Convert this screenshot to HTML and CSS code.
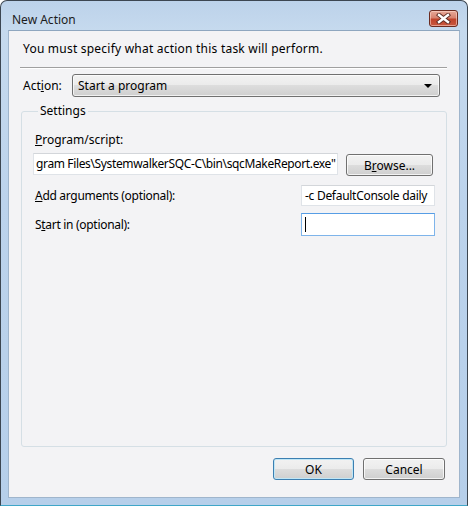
FILE: index.html
```html
<!DOCTYPE html>
<html lang="en">

<head>
    <meta charset="UTF-8" />
    <title>New Action</title>
    <link rel="stylesheet" href="styles.css">
</head>

<body>
    <div class="window">
        <div class="titlebar">
            <span class="title">New Action</span>
            <button class="close" type="button" aria-label="Close">
                <svg width="15" height="11" viewBox="0 0 15 11">
                    <path d="M3 2 L12 9 M12 2 L3 9" stroke="#5a2a22" stroke-width="4.2" stroke-linecap="square" fill="none" />
                    <path d="M3 2 L12 9 M12 2 L3 9" stroke="#fff" stroke-width="2.4" stroke-linecap="square" fill="none" />
                </svg>
            </button>
        </div>
        <div class="client">
            <p class="intro">You must specify what action this task will perform.</p>
            <div class="sep"></div>
            <div class="action-row">
                <label class="lbl">Act<u>i</u>on:</label>
                <div class="combo">
                    <span>Start a program</span>
                    <span class="arrow"></span>
                </div>
            </div>
            <fieldset class="group">
                <legend>Settings</legend>
                <label class="lbl prog-lbl"><u>P</u>rogram/script:</label>
                <div class="prog-row">
                    <div class="field prog">gram Files\SystemwalkerSQC-C\bin\sqcMakeReport.exe"</div>
                    <button class="btn browse" type="button">B<u>r</u>owse...</button>
                </div>
                <div class="opt-row args">
                    <label class="lbl"><u>A</u>dd arguments (optional):</label>
                    <div class="field short">-c DefaultConsole daily</div>
                </div>
                <div class="opt-row start">
                    <label class="lbl">S<u>t</u>art in (optional):</label>
                    <div class="field short focus"><span class="caret"></span></div>
                </div>
            </fieldset>
            <div class="footer">
                <button class="btn default" type="button">OK</button>
                <button class="btn" type="button">Cancel</button>
            </div>
        </div>
    </div>
</body>

</html>
```

FILE: styles.css
```css
html,
body {
  margin: 0;
  padding: 0;
  background: #ffffff;
}

body {
  font-family: "Noto Sans", "Open Sans", sans-serif;
  font-size: 12px;
  color: #000;
}

.window {
  width: 468px;
  height: 506px;
  box-sizing: border-box;
  border: 1px solid #3c4651;
  border-bottom-color: #3fa6c8;
  border-radius: 7px 7px 0 0;
  background: linear-gradient(to bottom, #bcd2ea 0px, #c6daee 30px, #bcd3ec 200px, #b6cfea 100%);
  padding: 0 7px 7px 7px;
  display: flex;
  flex-direction: column;
}

.titlebar {
  height: 29px;
  display: flex;
  align-items: flex-start;
  justify-content: space-between;
}

.title {
  margin: 11px 0 0 4px;
  line-height: 16px;
  color: #1c1c1c;
}

.close {
  margin: 9px 2px 0 0;
  width: 29px;
  height: 17px;
  padding: 0;
  border: 1px solid #6b2b20;
  border-radius: 3px;
  background: linear-gradient(to bottom, #e7a999 0%, #d88370 45%, #c0432b 55%, #c8583f 100%);
  box-shadow: inset 0 0 0 1px rgba(255, 220, 210, 0.55);
  display: flex;
  align-items: center;
  justify-content: center;
}

.client {
  flex: 1;
  background: #f3f3f5;
  border: 1px solid #9fb5cc;
  border-top-color: #8ea6bf;
  display: flex;
  flex-direction: column;
}

.intro {
  margin: 10px 0 0 14px;
  line-height: 16px;
  letter-spacing: 0.22px;
}

.sep {
  margin: 10px 12px 0 11px;
  height: 1px;
  background: #a0a0a0;
  border-bottom: 1px solid #ffffff;
}

.lbl {
  line-height: 16px;
}

.action-row {
  display: flex;
  align-items: center;
  margin: 5px 0 0 14px;
}

.combo {
  margin-left: auto;
  margin-right: 19px;
  width: 368px;
  height: 23px;
  box-sizing: border-box;
  border: 1px solid #707070;
  border-radius: 3px;
  background: linear-gradient(to bottom, #f2f2f2 0%, #ebebeb 50%, #dddddd 50%, #cfcfcf 100%);
  box-shadow: inset 0 0 0 1px rgba(255, 255, 255, 0.7);
  display: flex;
  align-items: center;
  justify-content: space-between;
  padding: 0 7px 0 5px;
}

.arrow {
  width: 0;
  height: 0;
  border-left: 4px solid transparent;
  border-right: 4px solid transparent;
  border-top: 4px solid #000;
}

.group {
  margin: 6px 12px 0 12px;
  padding: 13px 12px 0 11px;
  height: 344px;
  box-sizing: border-box;
  border: 1px solid #d5dfe5;
  border-radius: 3px;
  display: flex;
  flex-direction: column;
}

.group legend {
  padding: 0 2px;
  margin-left: 5px;
  line-height: 16px;
}

.prog-lbl {
  margin-left: 2px;
}

.opt-row .lbl {
  letter-spacing: -0.3px;
}

.prog-row {
  display: flex;
  align-items: flex-start;
  margin-top: 5px;
}

.field {
  box-sizing: border-box;
  height: 22px;
  background: #fff;
  border: 1px solid #dfe3e8;
  border-top-color: #d3d6da;
  padding: 0 2px 0 3px;
  line-height: 20px;
  white-space: nowrap;
  overflow: hidden;
}

.prog {
  width: 305px;
  letter-spacing: -0.36px;
  padding-left: 2px;
}

.browse {
  margin: 1px 0 0 8px;
  width: 87px;
}

.opt-row {
  display: flex;
  align-items: center;
  justify-content: space-between;
  padding-left: 2px;
}

.args {
  margin-top: 9px;
}

.args .field {
  height: 21px;
  line-height: 19px;
  letter-spacing: -0.28px;
}

.start {
  margin-top: 7px;
}

.short {
  width: 134px;
  margin-right: -1px;
}

.focus {
  height: 23px;
  border-color: #7eb4ea;
  border-top-color: #569de5;
  display: flex;
  align-items: center;
}

.caret {
  display: block;
  width: 1px;
  height: 15px;
  background: #000;
}

.btn {
  height: 22px;
  box-sizing: border-box;
  padding: 0;
  font-family: inherit;
  font-size: 12px;
  color: #000;
  border: 1px solid #707070;
  border-radius: 3px;
  background: linear-gradient(to bottom, #f2f2f2 0%, #ebebeb 50%, #dddddd 50%, #cfcfcf 100%);
  box-shadow: inset 0 0 0 1px rgba(255, 255, 255, 0.75);
}

.footer {
  display: flex;
  justify-content: flex-end;
  gap: 9px;
  margin: 11px 14px 0 0;
}

.footer .btn {
  width: 81px;
}

.footer .btn + .btn {
  width: 82px;
}

.default {
  border-color: #3c7fb1;
  box-shadow: inset 0 0 0 1px #c0e6f6;
}
```
